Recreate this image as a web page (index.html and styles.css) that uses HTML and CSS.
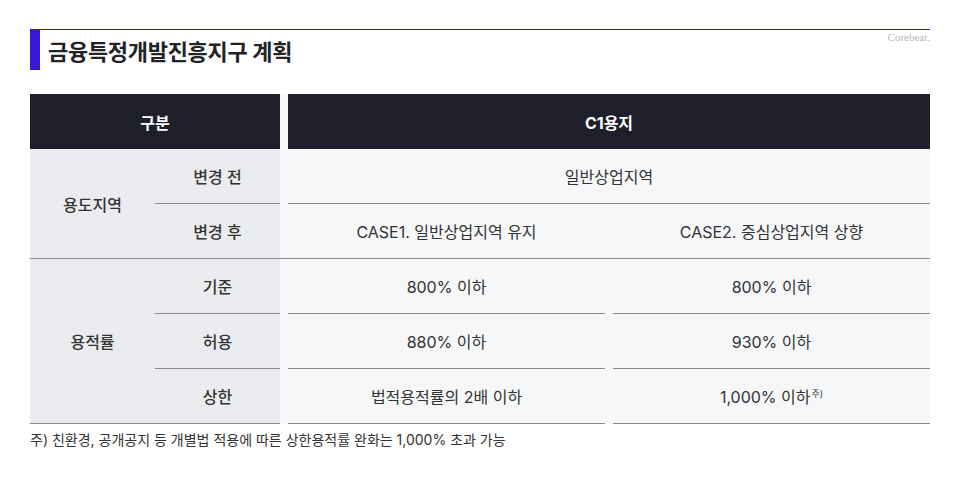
FILE: index.html
```html
<!DOCTYPE html>
<html lang="ko">
<head>
<meta charset="utf-8">
<link rel="stylesheet" href="styles.css">
</head>
<body>
<div class="page">
  <div class="title-row">
    <h1 class="title">금융특정개발진흥지구 계획</h1>
    <span class="brand">Corebeat.</span>
  </div>
  <div class="table">
    <div class="th th-left">구분</div>
    <div class="th th-right">C1용지</div>

    <div class="lc lc-group g1 bb">용도지역</div>
    <div class="lc r2 bb">변경 전</div>
    <div class="rc span r2 bb">일반상업지역</div>

    <div class="lc r3 bb">변경 후</div>
    <div class="gapline c3 r3"></div>
    <div class="rc c4 r3 bb">CASE1. 일반상업지역 유지</div>
    <div class="gapline c5 r3"></div>
    <div class="rc c6 r3 bb">CASE2. 중심상업지역 상향</div>

    <div class="lc lc-group g2 bb">용적률</div>
    <div class="lc r4 bb">기준</div>
    <div class="rc c4 r4 bb">800% 이하</div>
    <div class="rc c6 r4 bb">800% 이하</div>

    <div class="lc r5 bb">허용</div>
    <div class="rc c4 r5 bb">880% 이하</div>
    <div class="rc c6 r5 bb">930% 이하</div>

    <div class="lc r6 bb">상한</div>
    <div class="rc c4 r6 bb">법적용적률의 2배 이하</div>
    <div class="rc c6 r6 bb">1,000% 이하<sup class="note">주)</sup></div>
  </div>
  <p class="footnote">주) 친환경, 공개공지 등 개별법 적용에 따른 상한용적률 완화는 1,000% 초과 가능</p>
</div>
</body>
</html>
```
FILE: styles.css
```css
html, body {
  margin: 0;
  padding: 0;
  background: #ffffff;
}
body {
  font-family: "Inter", "Noto Sans CJK KR", "Noto Sans", sans-serif;
  color: #333333;
}
.page {
  padding: 29px 30px 0;
}
.title-row {
  display: flex;
  justify-content: space-between;
  align-items: flex-start;
  border-top: 1px solid #3a17c9;
}
.title {
  margin: 0;
  height: 40px;
  border-left: 10px solid #3a17d2;
  padding-left: 8px;
  display: flex;
  align-items: center;
  font-size: 22px;
  font-weight: 700;
  color: #222327;
  letter-spacing: -0.3px;
}
.brand {
  font-family: "Liberation Serif", serif;
  font-size: 11px;
  color: #b8b8b8;
  line-height: 12px;
  margin-top: 1px;
}
.table {
  margin-top: 24px;
  display: grid;
  grid-template-columns: 125px 125px 8px 317px 8px 317px;
  grid-template-rows: repeat(6, 55px);
  background: #f6f7f9;
  font-size: 16px;
}
.table > div {
  display: flex;
  align-items: center;
  justify-content: center;
  box-sizing: border-box;
}
.th {
  background: #1e1f2b;
  color: #ffffff;
  font-weight: 700;
  grid-row: 1;
}
.th-left { grid-column: 1 / 3; }
.th-right { grid-column: 4 / 7; }
.lc {
  background: #ebecf0;
  font-weight: 500;
  color: #333333;
  grid-column: 2;
}
.lc-group { grid-column: 1; }
.g1 { grid-row: 2 / 4; }
.g2 { grid-row: 4 / 7; }
.rc { color: #333333; }
.bb { border-bottom: 1px solid #8c8c8c; }
.gapline { border-bottom: 1px solid #8c8c8c; }
.span { grid-column: 4 / 7; }
.c3 { grid-column: 3; }
.c4 { grid-column: 4; }
.c5 { grid-column: 5; }
.c6 { grid-column: 6; }
.r2 { grid-row: 2; }
.r3 { grid-row: 3; }
.r4 { grid-row: 4; }
.r5 { grid-row: 5; }
.r6 { grid-row: 6; }
.note {
  font-size: 9px;
  align-self: flex-start;
  margin-top: 18px;
  margin-left: 1px;
}
.footnote {
  margin: 7px 0 0;
  font-size: 14px;
  line-height: 18px;
  color: #333333;
}
```
